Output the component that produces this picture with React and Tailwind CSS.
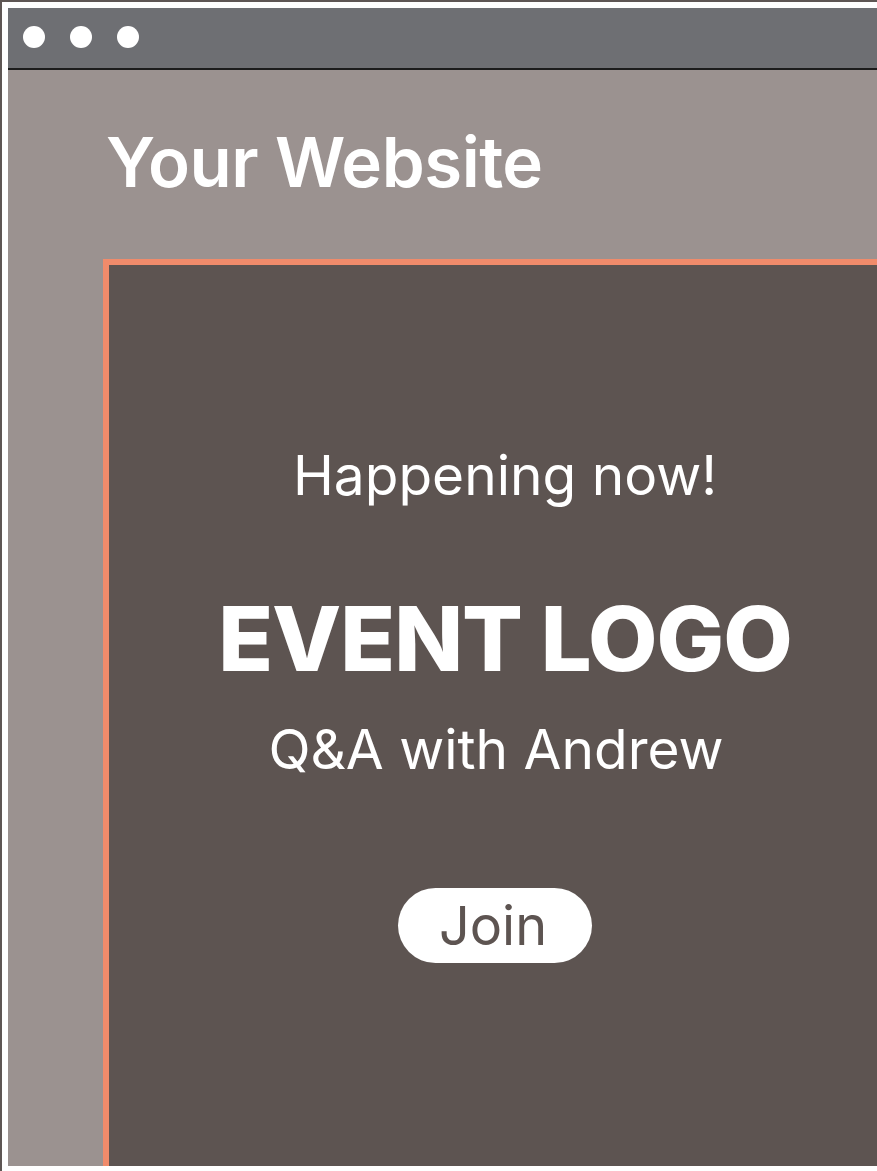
export default function App() {
  const font = { fontFamily: "Inter, 'Noto Sans', sans-serif" };
  return (
    <div className="w-[877px] h-[1171px] overflow-hidden bg-white border-t-2 border-l-2 border-[#5e5654]" style={font}>
      <div className="ml-[6px] mt-[6px] h-[1158px] flex flex-col overflow-hidden">
        <div className="h-[60px] bg-[#6e6f73] flex items-center gap-[25px] pl-[15px] pb-[2px] shrink-0">
          <span className="w-[22px] h-[22px] rounded-full bg-white" />
          <span className="w-[22px] h-[22px] rounded-full bg-white" />
          <span className="w-[22px] h-[22px] rounded-full bg-white" />
        </div>
        <div className="h-[2px] bg-[#1c1c1c] shrink-0" />
        <div className="flex-1 bg-[#9b9290] flex flex-col">
          <div className="h-[189px] pl-[98px] pt-[58px] shrink-0">
            <h1 className="text-white font-semibold text-[69px] leading-none tracking-[-0.5px]">Your Website</h1>
          </div>
          <div className="ml-[95px] w-[798px] shrink-0 flex-1 border-t-[6px] border-l-[6px] border-[#f08b6b] bg-[#5d5451] flex flex-col items-center text-white">
            <p className="mt-[183px] text-[55px] leading-none font-normal">Happening now!</p>
            <p className="mt-[91px] text-[90px] leading-none font-extrabold tracking-[-1px]">EVENT LOGO</p>
            <p className="mt-[38px] mr-[18px] text-[55px] leading-none font-normal">Q&amp;A with Andrew</p>
            <button className="mt-[111px] mr-[20px] w-[194px] h-[75px] rounded-full bg-white text-[#5d5451] text-[54px] leading-none flex items-center justify-center pr-[4px]">Join</button>
          </div>
        </div>
      </div>
    </div>
  );
}
